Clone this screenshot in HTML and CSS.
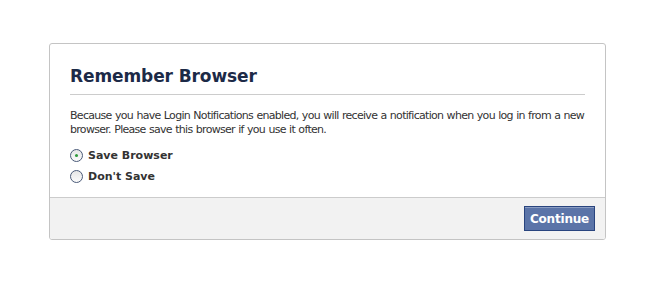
FILE: index.html
```html
<!DOCTYPE html>
<html>
<head>
<meta charset="utf-8">
<link rel="stylesheet" href="styles.css">
</head>
<body>
<div class="page">
  <div class="dialog">
    <div class="content">
      <h2 class="title">Remember Browser</h2>
      <p class="desc">Because you have Login Notifications enabled, you will receive a notification when you log in from a new browser. Please save this browser if you use it often.</p>
      <div class="options">
        <label class="option"><span class="radio checked"></span>Save Browser</label>
        <label class="option"><span class="radio"></span>Don't Save</label>
      </div>
    </div>
    <div class="footer">
      <button class="btn">Continue</button>
    </div>
  </div>
</div>
</body>
</html>
```
FILE: styles.css
```css
html, body {
  margin: 0;
  padding: 0;
  background: #fff;
}
.page {
  padding: 43px 0 0 49px;
  font-family: "DejaVu Sans", Tahoma, sans-serif;
}
.dialog {
  width: 555px;
  border: 1px solid #c4c4c4;
  border-radius: 3px;
  background: #fff;
  overflow: hidden;
}
.content {
  padding: 22px 20px 14px 20px;
}
.title {
  margin: 0;
  font-size: 17px;
  font-weight: bold;
  color: #1c2a47;
  line-height: 20px;
  padding-bottom: 8px;
  border-bottom: 1px solid #cccccc;
  letter-spacing: -0.1px;
}
.desc {
  margin: 14px 0 0 0;
  font-size: 11px;
  line-height: 14px;
  color: #333;
  letter-spacing: -0.7px;
  word-spacing: 0.5px;
}
.options {
  margin-top: 12px;
  display: flex;
  flex-direction: column;
  gap: 8px;
}
.option {
  display: flex;
  align-items: center;
  gap: 5px;
  font-size: 11px;
  font-weight: bold;
  color: #333;
  line-height: 13px;
}
.radio {
  width: 11px;
  height: 11px;
  border: 1px solid #4a5a78;
  border-radius: 50%;
  background: linear-gradient(#e6e6e6, #fbfbfb);
  position: relative;
  box-sizing: content-box;
}
.radio.checked::after {
  content: "";
  position: absolute;
  left: 4px;
  top: 4px;
  width: 3px;
  height: 3px;
  border-radius: 50%;
  background: #2e9a3c;
}
.footer {
  background: #f2f2f2;
  border-top: 1px solid #cccccc;
  display: flex;
  justify-content: flex-end;
  padding: 8px 10px 8px 0;
}
.btn {
  font-family: "DejaVu Sans", Tahoma, sans-serif;
  font-size: 12px;
  font-weight: bold;
  color: #fff;
  background: #5b74a8;
  border: 1px solid #29447e;
  box-shadow: inset 0 1px 0 #8a9cc2;
  padding: 0;
  height: 25px;
  width: 71px;
  margin: 0;
  letter-spacing: -0.2px;
}
```
